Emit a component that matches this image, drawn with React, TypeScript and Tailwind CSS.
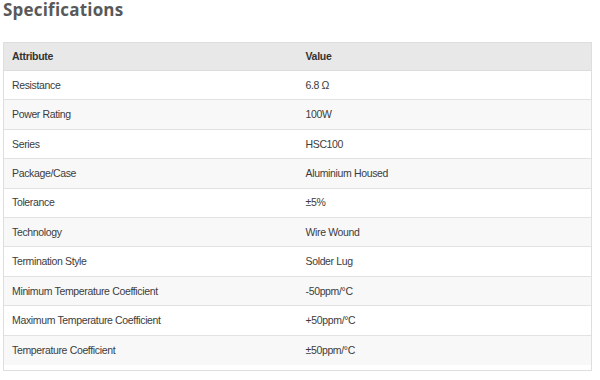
const rows: [string, string][] = [
  ["Resistance", "6.8 Ω"],
  ["Power Rating", "100W"],
  ["Series", "HSC100"],
  ["Package/Case", "Aluminium Housed"],
  ["Tolerance", "±5%"],
  ["Technology", "Wire Wound"],
  ["Termination Style", "Solder Lug"],
  ["Minimum Temperature Coefficient", "-50ppm/°C"],
  ["Maximum Temperature Coefficient", "+50ppm/°C"],
  ["Temperature Coefficient", "±50ppm/°C"],
];

export default function App() {
  return (
    <div className="w-[600px] h-[380px] bg-white" style={{ fontFamily: '"Liberation Sans", Arial, sans-serif' }}>
      <h2
        className="pl-[3px] pt-0 text-[17px] leading-[20px] font-bold text-[#595959] h-[42px] tracking-[0.2px]"
        style={{ fontFamily: '"Open Sans", "DejaVu Sans", sans-serif' }}
      >
        Specifications
      </h2>
      <div className="ml-[3px] w-[589px] border border-[#dedede] pb-[5px]">
        <div className="grid grid-cols-2 h-[28px] pt-[1px] bg-[#e8e8e8] border-b border-[#dcdcdc] items-center text-[10.5px] tracking-[-0.3px] font-bold text-[#333]">
          <div className="pl-[8px]">Attribute</div>
          <div className="pl-[8px]">Value</div>
        </div>
        {rows.map(([a, v], i) => (
          <div
            key={a}
            className={`grid grid-cols-2 h-[29.4px] pt-[1px] items-center text-[10.5px] tracking-[-0.35px] text-[#3c3c3c] ${i < rows.length - 1 ? "border-b border-[#e2e2e2]" : ""} ${i % 2 === 1 ? "bg-[#f8f8f8]" : "bg-white"}`}
          >
            <div className="pl-[8px]">{a}</div>
            <div className="pl-[8px]">{v}</div>
          </div>
        ))}
      </div>
    </div>
  );
}
